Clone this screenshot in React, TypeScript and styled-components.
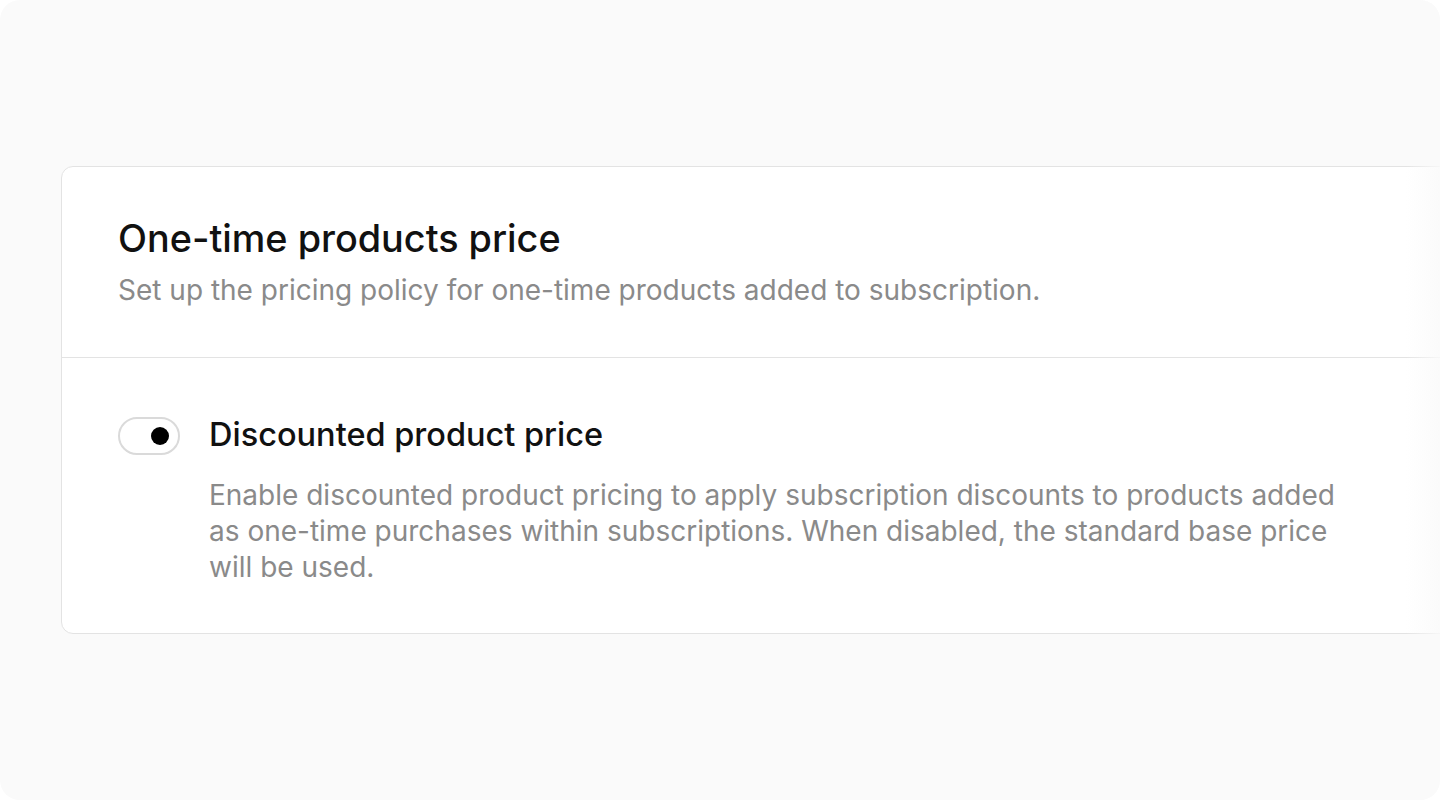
import styled, { createGlobalStyle } from "styled-components";

const GlobalStyle = createGlobalStyle`
  html, body {
    margin: 0;
    padding: 0;
    background: #ffffff;
  }
  body {
    font-family: Inter, "Noto Sans", sans-serif;
    -webkit-font-smoothing: antialiased;
  }
`;

const Frame = styled.div`
  position: relative;
  width: 1440px;
  height: 800px;
  border-radius: 20px;
  background: #fafafa;
  overflow: hidden;
  padding: 166px 0 0 61px;
  box-sizing: border-box;
`;

const EdgeFade = styled.div`
  position: absolute;
  top: 0;
  right: 0;
  width: 34px;
  height: 100%;
  background: linear-gradient(to right, rgba(250, 250, 250, 0) 0%, rgba(250, 250, 250, 0.85) 100%);
  pointer-events: none;
`;

const Card = styled.section`
  width: 1440px;
  background: #ffffff;
  border: 1px solid #e3e3e3;
  border-radius: 12px;
`;

const CardHeader = styled.div`
  display: flex;
  flex-direction: column;
  gap: 11px;
  padding: 48px 56px 49px;
  border-bottom: 1px solid #e3e3e3;
`;

const Title = styled.h2`
  margin: 0;
  font-size: 37.8px;
  line-height: 46px;
  font-weight: 500;
  color: #111111;
`;

const Subtitle = styled.p`
  margin: 0;
  font-size: 28px;
  line-height: 36px;
  font-weight: 400;
  color: #8a8a8a;
`;

const CardBody = styled.div`
  display: flex;
  align-items: flex-start;
  gap: 29px;
  padding: 57px 56px 48px;
`;

const Toggle = styled.button<{ $on?: boolean }>`
  flex: none;
  display: flex;
  align-items: center;
  justify-content: ${(p) => (p.$on ? "flex-end" : "flex-start")};
  width: 62px;
  height: 38px;
  margin-top: 2px;
  padding: 0 9px;
  box-sizing: border-box;
  border: 2px solid #dadada;
  border-radius: 19px;
  background: #ffffff;
  cursor: pointer;
`;

const Knob = styled.span`
  width: 18px;
  height: 18px;
  border-radius: 50%;
  background: #000000;
`;

const OptionText = styled.div`
  display: flex;
  flex-direction: column;
  gap: 22px;
`;

const OptionLabel = styled.h3`
  margin: 0;
  font-size: 32.5px;
  line-height: 40px;
  font-weight: 500;
  color: #111111;
`;

const OptionDescription = styled.p`
  margin: 0;
  max-width: 1140px;
  font-size: 28px;
  line-height: 36px;
  font-weight: 400;
  color: #8a8a8a;
`;

export default function App() {
  return (
    <>
      <GlobalStyle />
      <Frame>
        <Card>
          <CardHeader>
            <Title>One-time products price</Title>
            <Subtitle>Set up the pricing policy for one-time products added to subscription.</Subtitle>
          </CardHeader>
          <CardBody>
            <Toggle $on aria-label="Discounted product price">
              <Knob />
            </Toggle>
            <OptionText>
              <OptionLabel>Discounted product price</OptionLabel>
              <OptionDescription>
                Enable discounted product pricing to apply subscription discounts to products added as
                one-time purchases within subscriptions. When disabled, the standard base price will be
                used.
              </OptionDescription>
            </OptionText>
          </CardBody>
        </Card>
        <EdgeFade />
      </Frame>
    </>
  );
}
